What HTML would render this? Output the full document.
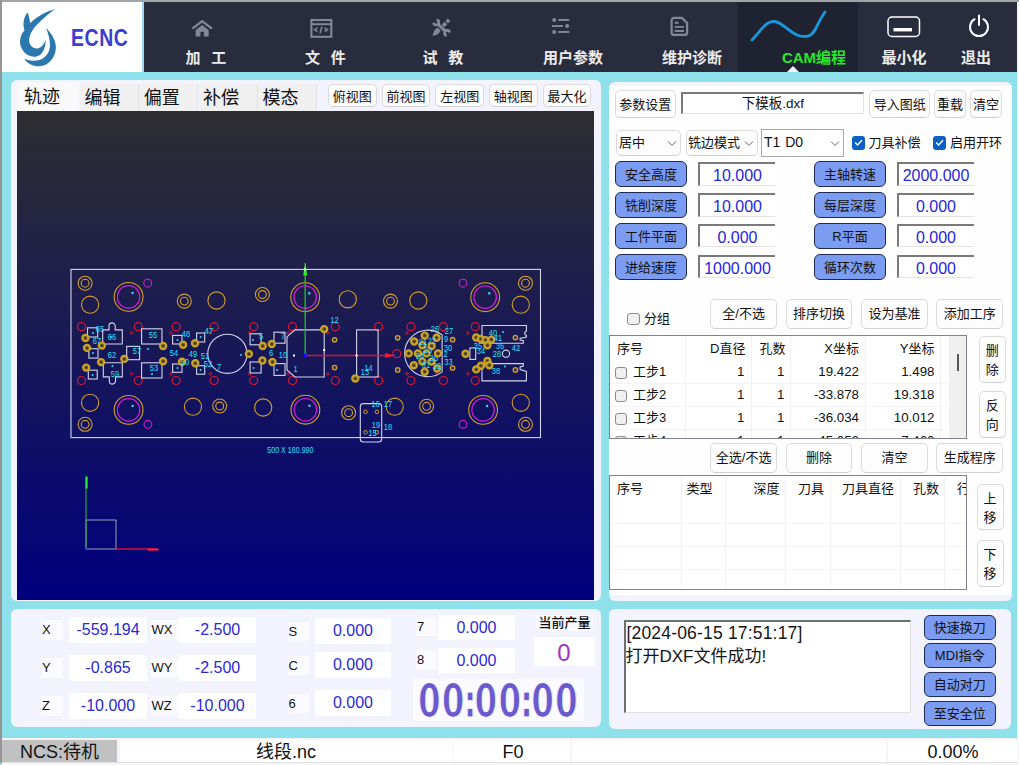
<!DOCTYPE html><html lang="zh"><head><meta charset="utf-8"><title>ECNC</title><style>
*{box-sizing:border-box;margin:0;padding:0}
html,body{width:1019px;height:765px;overflow:hidden;background:#8ee1ea}
body{font-family:"Liberation Sans","Noto Sans CJK SC",sans-serif;color:#111;position:relative}
.abs,.abs *{position:absolute}
#root{position:absolute;left:0;top:0;width:1019px;height:765px;background:#8ee1ea;overflow:hidden}
#root div,#root span,#root svg{position:absolute}
.t{white-space:nowrap;line-height:1}
.c{text-align:center}
.r{text-align:right}
.panel{background:#f2f3fc;border-radius:6px}
.btn{background:#fdfdfd;border:1px solid #dbdbdb;border-bottom-color:#cfcfcf;border-radius:5px;font-size:13px;text-align:center;white-space:nowrap;color:#111}
.bb{background:#7b9cf0;border:1.5px solid #1c2a55;border-radius:6px;font-size:13px;text-align:center;white-space:nowrap;color:#111}
.inp{background:#fff;border-top:2px solid #7a7a7a;border-left:2px solid #7a7a7a;border-bottom:1px solid #e3e3e3;font-size:16px;color:#2525dc;text-align:center;white-space:nowrap}
.val{background:#fff;color:#2a2ad8;font-size:16px;text-align:center;white-space:nowrap}
.lab{background:#fbfbff;font-size:13px;color:#111;white-space:nowrap}
.nav{color:#ececec;font-weight:bold;font-size:15px;white-space:nowrap;text-align:center;line-height:16px}
.tab{font-size:18px;color:#111;white-space:nowrap;text-align:center;background:#f0f0f0;border-right:1px solid #e2e2e2}
.cb{border:1px solid #8a8a8a;border-radius:3px;background:#f0f0f0}
.cbx{border-radius:3px;background:#0b60c4}
.co{position:relative !important;left:-3px;letter-spacing:-5.7px}
.th{font-size:13px;white-space:nowrap;color:#111}
</style></head><body><div id="root"><div class="" style="left:0px;top:0px;width:1019px;height:1.6px;background:#a2a5a5"></div><div class="" style="left:0px;top:0px;width:1.9px;height:763px;background:#969696"></div><div class="" style="left:1017px;top:1.5px;width:2px;height:764px;background:#f7f7fa"></div><div class="" style="left:2px;top:2px;width:140px;height:69.5px;background:#fff"></div><div class="" style="left:142px;top:2px;width:2px;height:69.5px;background:#9fd4f5"></div><div class="" style="left:144px;top:2px;width:873px;height:69.5px;background:#282c3c"></div><div class="" style="left:738px;top:2px;width:120px;height:69.5px;background:#1f2231"></div><svg style="left:10px;top:0px" width="60" height="75" viewBox="0 0 612 765"><g fill="#2a78ad">
<path d="M462 93 C380 115 295 155 205 238 C203 200 192 160 180 128 C150 160 122 230 148 310 C105 350 92 425 112 480 C138 545 200 585 262 578 C335 568 368 480 362 405 C348 450 322 490 275 494 C225 494 192 452 196 402 C200 345 240 285 292 235 C340 190 400 135 462 93 Z"/>
<path d="M368 283 C422 340 468 410 468 482 C468 562 420 645 340 668 C268 688 188 662 143 598 C200 622 268 626 318 604 C376 578 408 518 408 458 C408 398 388 340 368 283 Z"/>
</g></svg><div class="t" style="left:71.4px;top:24.5px;font-size:23px;font-weight:bold;color:#3c3ccf;letter-spacing:0.7px;line-height:26px;transform-origin:0 0;transform:scaleX(0.845)">ECNC</div><div class="nav" style="left:156.4px;top:50px;width:100px;color:#ececec;letter-spacing:0.8px">加&nbsp;&nbsp;工</div><div class="nav" style="left:275.9px;top:50px;width:100px;color:#ececec;letter-spacing:0.8px">文&nbsp;&nbsp;件</div><div class="nav" style="left:393.4px;top:50px;width:100px;color:#ececec;letter-spacing:0.8px">试&nbsp;&nbsp;教</div><div class="nav" style="left:523px;top:50px;width:100px;color:#ececec;letter-spacing:0px">用户参数</div><div class="nav" style="left:642px;top:50px;width:100px;color:#ececec;letter-spacing:0px">维护诊断</div><div class="nav" style="left:764px;top:50px;width:100px;color:#27e827;letter-spacing:0px">CAM编程</div><div class="nav" style="left:854px;top:50px;width:100px;color:#ececec;letter-spacing:0px">最小化</div><div class="nav" style="left:926px;top:50px;width:100px;color:#ececec;letter-spacing:0px">退出</div><svg style="left:191.3px;top:18.6px" width="22.3" height="19.25" viewBox="0 0 24 22" preserveAspectRatio="none"><path d="M1.5 11 L12 2.5 L22.5 11" fill="none" stroke="#828899" stroke-width="2.6" stroke-linejoin="miter"/><path d="M5 12.5 L12 6.8 L19 12.5 V20 H13.8 V14.5 H10.2 V20 H5 Z" fill="#828899"/></svg><svg style="left:310px;top:17px" width="24" height="22" viewBox="0 0 24 22"><rect x="1.4" y="3" width="19.9" height="16.8" fill="none" stroke="#828899" stroke-width="2.1"/><line x1="1.4" y1="7.2" x2="21.3" y2="7.2" stroke="#828899" stroke-width="1.9"/><path d="M7.4 10.9 L4.6 12.8 L7.4 14.7 M14.6 10.9 L17.4 12.8 L14.6 14.7 M11.9 9.6 L10 16.4" fill="none" stroke="#828899" stroke-width="1.6"/></svg><svg style="left:432px;top:17.6px" width="20" height="20" viewBox="0 0 20 20"><g stroke="#828899" fill="none"><path d="M6 6.2 L13.6 13.4" stroke-width="2.9"/><path d="M4.65 1.84 A2.6 2.6 0 1 1 1.64 4.85" stroke-width="2.7"/><path d="M17.76 14.55 A2.6 2.6 0 1 0 14.75 17.56" stroke-width="2.7"/></g><g fill="#828899"><path d="M0.5 18 L2.2 12.4 L5.6 9.4 L8.8 12.6 L6 16.2 Z"/><rect x="10.3" y="4.8" width="4.2" height="3.6" transform="rotate(-45 12.4 6.6)"/><rect x="14.2" y="1.2" width="3.4" height="3.6" transform="rotate(-45 15.9 3)"/></g></svg><svg style="left:550px;top:16px" width="22" height="20" viewBox="0 0 22 20"><g fill="#828899"><circle cx="4.2" cy="3.9" r="2"/><rect x="8.2" y="3" width="11.2" height="1.9"/><rect x="2" y="9.1" width="11" height="1.9"/><circle cx="17.1" cy="9.9" r="2"/><circle cx="4.2" cy="15.9" r="2"/><rect x="8.2" y="15" width="11.2" height="1.9"/></g></svg><svg style="left:670px;top:16px" width="20" height="22" viewBox="0 0 20 22"><path d="M4.1 1.9 H12 L17.1 7 V16.4 A2.5 2.5 0 0 1 14.6 18.9 H4.1 A2.5 2.5 0 0 1 1.6 16.4 V4.4 A2.5 2.5 0 0 1 4.1 1.9 Z" fill="none" stroke="#828899" stroke-width="2.2"/><path d="M4.7 6.7 H8.6 M4.7 10.9 H14 M4.7 15 H14" stroke="#828899" stroke-width="1.9"/></svg><svg style="left:748px;top:8px" width="84" height="38" viewBox="0 0 84 38"><path d="M4 32 C12 24 18 12 27 13.5 C36 15 42 26 52 28 C62 30 65 26 68 20 C71 14 74 8 77 4" fill="none" stroke="#1b98dc" stroke-width="2.8" stroke-linecap="round"/></svg><svg style="left:787px;top:66px" width="12" height="6" viewBox="0 0 12 6"><path d="M0 6 L6 0 L12 6 Z" fill="#f2f3fc"/></svg><svg style="left:886px;top:15px" width="36" height="24" viewBox="0 0 36 24"><rect x="2" y="2" width="31.5" height="19.5" rx="4" fill="none" stroke="#fff" stroke-width="1.5"/><rect x="7.5" y="13" width="18.5" height="3.4" fill="#fff"/></svg><svg style="left:966px;top:13px" width="26" height="26" viewBox="0 0 26 26"><path d="M8.6 6.2 A9 9 0 1 0 17.4 6.2" fill="none" stroke="#fff" stroke-width="2" stroke-linecap="round"/><path d="M13 2.5 V12" stroke="#fff" stroke-width="2" stroke-linecap="round"/></svg><div class="panel" style="left:11px;top:80px;width:590px;height:521px;"></div><div class="tab" style="left:17px;top:82px;width:62px;height:29px;line-height:29px;background:#f9f9fc;border-right:none;line-height:31px;text-align:left;padding-left:7px">轨迹</div><div class="tab" style="left:80.0px;top:84px;width:59px;height:27px;line-height:27px;line-height:28px;text-align:left;padding-left:4.5px">编辑</div><div class="tab" style="left:139.3px;top:84px;width:59px;height:27px;line-height:27px;line-height:28px;text-align:left;padding-left:4.5px">偏置</div><div class="tab" style="left:198.6px;top:84px;width:59px;height:27px;line-height:27px;line-height:28px;text-align:left;padding-left:4.5px">补偿</div><div class="tab" style="left:257.9px;top:84px;width:59px;height:27px;line-height:27px;line-height:28px;text-align:left;padding-left:4.5px">模态</div><div class="btn" style="left:328.0px;top:83.8px;width:48.5px;height:23.2px;line-height:23.2px;line-height:23px">俯视图</div><div class="btn" style="left:381.7px;top:83.8px;width:48.5px;height:23.2px;line-height:23.2px;line-height:23px">前视图</div><div class="btn" style="left:435.4px;top:83.8px;width:48.5px;height:23.2px;line-height:23.2px;line-height:23px">左视图</div><div class="btn" style="left:489.1px;top:83.8px;width:48.5px;height:23.2px;line-height:23.2px;line-height:23px">轴视图</div><div class="btn" style="left:542.8px;top:83.8px;width:48.5px;height:23.2px;line-height:23.2px;line-height:23px">最大化</div><div id="cv" style="left:17px;top:111.4px;width:577px;height:488.4px;background:linear-gradient(180deg,#2e2e31 0%,#00007f 100%);overflow:hidden"><svg style="left:0;top:-0.4px" width="577" height="489" viewBox="17 111 577 489" font-family="Liberation Sans, sans-serif"><rect x="71" y="269.4" width="469.5" height="168.2" fill="none" stroke="#d4d4ec" stroke-width="1.1"/><circle cx="85.1" cy="283.2" r="7" fill="none" stroke="#d4a02c" stroke-width="1.1"/><circle cx="85.1" cy="283.2" r="3.9" fill="none" stroke="#d4a02c" stroke-width="1.1"/><circle cx="184.3" cy="301.1" r="7" fill="none" stroke="#d4a02c" stroke-width="1.1"/><circle cx="184.3" cy="301.1" r="3.9" fill="none" stroke="#d4a02c" stroke-width="1.1"/><circle cx="262.4" cy="294.5" r="7" fill="none" stroke="#d4a02c" stroke-width="1.1"/><circle cx="262.4" cy="294.5" r="3.9" fill="none" stroke="#d4a02c" stroke-width="1.1"/><circle cx="390.5" cy="301.1" r="7" fill="none" stroke="#d4a02c" stroke-width="1.1"/><circle cx="390.5" cy="301.1" r="3.9" fill="none" stroke="#d4a02c" stroke-width="1.1"/><circle cx="525.5" cy="283.2" r="7" fill="none" stroke="#d4a02c" stroke-width="1.1"/><circle cx="525.5" cy="283.2" r="3.9" fill="none" stroke="#d4a02c" stroke-width="1.1"/><circle cx="90.1" cy="304.7" r="8.6" fill="none" stroke="#d4a02c" stroke-width="1.1"/><circle cx="216.5" cy="300.5" r="8.6" fill="none" stroke="#d4a02c" stroke-width="1.1"/><circle cx="347.8" cy="299.3" r="8.6" fill="none" stroke="#d4a02c" stroke-width="1.1"/><circle cx="418.3" cy="300.5" r="8.6" fill="none" stroke="#d4a02c" stroke-width="1.1"/><circle cx="520.8" cy="304.7" r="8.6" fill="none" stroke="#d4a02c" stroke-width="1.1"/><circle cx="128.6" cy="296.9" r="14.4" fill="none" stroke="#d4a02c" stroke-width="1.1"/><circle cx="128.6" cy="296.9" r="11.2" fill="none" stroke="#d020d0" stroke-width="1.2"/><circle cx="132.6" cy="292.9" r="1.2" fill="#28e0ff"/><circle cx="305.2" cy="297.2" r="14.4" fill="none" stroke="#d4a02c" stroke-width="1.1"/><circle cx="305.2" cy="297.2" r="11.2" fill="none" stroke="#d020d0" stroke-width="1.2"/><circle cx="309.2" cy="293.2" r="1.2" fill="#28e0ff"/><circle cx="485.2" cy="297.2" r="14.4" fill="none" stroke="#d4a02c" stroke-width="1.1"/><circle cx="485.2" cy="297.2" r="11.2" fill="none" stroke="#d020d0" stroke-width="1.2"/><circle cx="489.2" cy="293.2" r="1.2" fill="#28e0ff"/><circle cx="147.7" cy="283.2" r="3.9" fill="none" stroke="#d020d0" stroke-width="1.1"/><circle cx="463.0" cy="283.2" r="3.9" fill="none" stroke="#d020d0" stroke-width="1.1"/><circle cx="85.1" cy="424.3" r="7" fill="none" stroke="#d4a02c" stroke-width="1.1"/><circle cx="85.1" cy="424.3" r="3.9" fill="none" stroke="#d4a02c" stroke-width="1.1"/><circle cx="219.7" cy="406.0" r="7" fill="none" stroke="#d4a02c" stroke-width="1.1"/><circle cx="219.7" cy="406.0" r="3.9" fill="none" stroke="#d4a02c" stroke-width="1.1"/><circle cx="348.6" cy="412.7" r="7" fill="none" stroke="#d4a02c" stroke-width="1.1"/><circle cx="348.6" cy="412.7" r="3.9" fill="none" stroke="#d4a02c" stroke-width="1.1"/><circle cx="426.6" cy="406.3" r="7" fill="none" stroke="#d4a02c" stroke-width="1.1"/><circle cx="426.6" cy="406.3" r="3.9" fill="none" stroke="#d4a02c" stroke-width="1.1"/><circle cx="525.5" cy="424.3" r="7" fill="none" stroke="#d4a02c" stroke-width="1.1"/><circle cx="525.5" cy="424.3" r="3.9" fill="none" stroke="#d4a02c" stroke-width="1.1"/><circle cx="90.1" cy="402.8" r="8.6" fill="none" stroke="#d4a02c" stroke-width="1.1"/><circle cx="193.0" cy="406.7" r="8.6" fill="none" stroke="#d4a02c" stroke-width="1.1"/><circle cx="263.2" cy="407.5" r="8.6" fill="none" stroke="#d4a02c" stroke-width="1.1"/><circle cx="394.7" cy="406.7" r="8.6" fill="none" stroke="#d4a02c" stroke-width="1.1"/><circle cx="520.8" cy="402.8" r="8.6" fill="none" stroke="#d4a02c" stroke-width="1.1"/><circle cx="128.6" cy="409.9" r="14.4" fill="none" stroke="#d4a02c" stroke-width="1.1"/><circle cx="128.6" cy="409.9" r="11.2" fill="none" stroke="#d020d0" stroke-width="1.2"/><circle cx="132.6" cy="405.9" r="1.2" fill="#28e0ff"/><circle cx="305.4" cy="409.7" r="14.4" fill="none" stroke="#d4a02c" stroke-width="1.1"/><circle cx="305.4" cy="409.7" r="11.2" fill="none" stroke="#d020d0" stroke-width="1.2"/><circle cx="309.4" cy="405.7" r="1.2" fill="#28e0ff"/><circle cx="483.1" cy="409.9" r="14.4" fill="none" stroke="#d4a02c" stroke-width="1.1"/><circle cx="483.1" cy="409.9" r="11.2" fill="none" stroke="#d020d0" stroke-width="1.2"/><circle cx="487.1" cy="405.9" r="1.2" fill="#28e0ff"/><circle cx="147.9" cy="424.3" r="3.9" fill="none" stroke="#d020d0" stroke-width="1.1"/><circle cx="463.0" cy="424.3" r="3.9" fill="none" stroke="#d020d0" stroke-width="1.1"/><circle cx="81.5" cy="326.7" r="4" fill="none" stroke="#d81838" stroke-width="1.2"/><circle cx="81.5" cy="380.5" r="4" fill="none" stroke="#d81838" stroke-width="1.2"/><circle cx="138.3" cy="326.7" r="4" fill="none" stroke="#d81838" stroke-width="1.2"/><circle cx="138.3" cy="380.5" r="4" fill="none" stroke="#d81838" stroke-width="1.2"/><circle cx="176.2" cy="326.7" r="4" fill="none" stroke="#d81838" stroke-width="1.2"/><circle cx="176.2" cy="380.5" r="4" fill="none" stroke="#d81838" stroke-width="1.2"/><circle cx="214.2" cy="326.7" r="4" fill="none" stroke="#d81838" stroke-width="1.2"/><circle cx="214.2" cy="380.5" r="4" fill="none" stroke="#d81838" stroke-width="1.2"/><circle cx="253.7" cy="326.7" r="4" fill="none" stroke="#d81838" stroke-width="1.2"/><circle cx="253.7" cy="380.5" r="4" fill="none" stroke="#d81838" stroke-width="1.2"/><circle cx="292.5" cy="326.7" r="4" fill="none" stroke="#d81838" stroke-width="1.2"/><circle cx="292.5" cy="380.5" r="4" fill="none" stroke="#d81838" stroke-width="1.2"/><circle cx="335.4" cy="326.7" r="4" fill="none" stroke="#d81838" stroke-width="1.2"/><circle cx="335.4" cy="380.5" r="4" fill="none" stroke="#d81838" stroke-width="1.2"/><circle cx="378.6" cy="326.7" r="4" fill="none" stroke="#d81838" stroke-width="1.2"/><circle cx="378.6" cy="380.5" r="4" fill="none" stroke="#d81838" stroke-width="1.2"/><circle cx="410.9" cy="326.7" r="4" fill="none" stroke="#d81838" stroke-width="1.2"/><circle cx="410.9" cy="380.5" r="4" fill="none" stroke="#d81838" stroke-width="1.2"/><circle cx="443.4" cy="326.7" r="4" fill="none" stroke="#d81838" stroke-width="1.2"/><circle cx="443.4" cy="380.5" r="4" fill="none" stroke="#d81838" stroke-width="1.2"/><circle cx="475.3" cy="326.7" r="4" fill="none" stroke="#d81838" stroke-width="1.2"/><circle cx="475.3" cy="380.5" r="4" fill="none" stroke="#d81838" stroke-width="1.2"/><circle cx="396.8" cy="353.7" r="4" fill="none" stroke="#d81838" stroke-width="1.2"/><circle cx="131.6" cy="333.0" r="1.2" fill="none" stroke="#d81838" stroke-width="0.9"/><circle cx="131.6" cy="373.8" r="1.2" fill="none" stroke="#d81838" stroke-width="0.9"/><circle cx="171.0" cy="333.0" r="1.2" fill="none" stroke="#d81838" stroke-width="0.9"/><circle cx="171.0" cy="373.8" r="1.2" fill="none" stroke="#d81838" stroke-width="0.9"/><circle cx="210.2" cy="333.0" r="1.2" fill="none" stroke="#d81838" stroke-width="0.9"/><circle cx="210.2" cy="373.8" r="1.2" fill="none" stroke="#d81838" stroke-width="0.9"/><circle cx="249.6" cy="333.0" r="1.2" fill="none" stroke="#d81838" stroke-width="0.9"/><circle cx="249.6" cy="373.8" r="1.2" fill="none" stroke="#d81838" stroke-width="0.9"/><circle cx="288.0" cy="333.0" r="1.2" fill="none" stroke="#d81838" stroke-width="0.9"/><circle cx="288.0" cy="373.8" r="1.2" fill="none" stroke="#d81838" stroke-width="0.9"/><circle cx="327.8" cy="333.0" r="1.2" fill="none" stroke="#d81838" stroke-width="0.9"/><circle cx="327.8" cy="373.8" r="1.2" fill="none" stroke="#d81838" stroke-width="0.9"/><circle cx="407.0" cy="333.0" r="1.2" fill="none" stroke="#d81838" stroke-width="0.9"/><circle cx="407.0" cy="373.8" r="1.2" fill="none" stroke="#d81838" stroke-width="0.9"/><circle cx="437.0" cy="333.0" r="1.2" fill="none" stroke="#d81838" stroke-width="0.9"/><circle cx="437.0" cy="373.8" r="1.2" fill="none" stroke="#d81838" stroke-width="0.9"/><circle cx="468.0" cy="333.0" r="1.2" fill="none" stroke="#d81838" stroke-width="0.9"/><circle cx="468.0" cy="373.8" r="1.2" fill="none" stroke="#d81838" stroke-width="0.9"/><rect x="87.5" y="327.8" width="10.2" height="9.2" rx="0" fill="none" stroke="#d4d4ec" stroke-width="1.1"/><rect x="88.9" y="348.7" width="9.1" height="9.4" rx="0" fill="none" stroke="#d4d4ec" stroke-width="1.1"/><rect x="88.3" y="370.2" width="8.9" height="8.8" rx="0" fill="none" stroke="#d4d4ec" stroke-width="1.1"/><path d="M102.7 344 V329.9 H109 V326 A3.1 3.1 0 0 1 115.2 326 V329.9 H122.3 V344 Z" fill="none" stroke="#d4d4ec" stroke-width="1.1"/><path d="M103.3 362.8 H122.3 V376.9 H115.5 V381 A3.1 3.1 0 0 1 109.3 381 V376.9 H103.3 Z" fill="none" stroke="#d4d4ec" stroke-width="1.1"/><rect x="141.6" y="328.8" width="20.4" height="15.2" rx="0" fill="none" stroke="#d4d4ec" stroke-width="1.1"/><rect x="141.6" y="362.8" width="20.4" height="15.2" rx="0" fill="none" stroke="#d4d4ec" stroke-width="1.1"/><rect x="126.7" y="346.4" width="12.9" height="13.3" rx="0" fill="none" stroke="#d4d4ec" stroke-width="1.1"/><rect x="172.6" y="335.4" width="9.4" height="8.6" rx="0" fill="none" stroke="#d4d4ec" stroke-width="1.1"/><rect x="172.6" y="364.0" width="9.4" height="8.3" rx="0" fill="none" stroke="#d4d4ec" stroke-width="1.1"/><rect x="196.6" y="333.0" width="8.1" height="9.0" rx="0" fill="none" stroke="#d4d4ec" stroke-width="1.1"/><rect x="196.6" y="365.7" width="8.1" height="8.5" rx="0" fill="none" stroke="#d4d4ec" stroke-width="1.1"/><circle cx="227.4" cy="353.8" r="19.6" fill="none" stroke="#d4d4ec" stroke-width="1.1"/><rect x="250.1" y="333.8" width="11.0" height="11.0" rx="0" fill="none" stroke="#d4d4ec" stroke-width="1.1"/><rect x="250.1" y="362.0" width="11.0" height="11.0" rx="0" fill="none" stroke="#d4d4ec" stroke-width="1.1"/><rect x="274.0" y="332.2" width="11.0" height="11.0" rx="0" fill="none" stroke="#d4d4ec" stroke-width="1.1"/><rect x="274.0" y="363.6" width="11.0" height="11.8" rx="0" fill="none" stroke="#d4d4ec" stroke-width="1.1"/><path d="M294.9 329.9 H324.2 V377 H294.9 L287 370 V336.9 Z" fill="none" stroke="#d4d4ec" stroke-width="1.1"/><rect x="356.6" y="329.9" width="21.5" height="47.1" rx="0" fill="none" stroke="#d4d4ec" stroke-width="1.1"/><rect x="360.3" y="403.6" width="21.4" height="38.4" rx="3" fill="none" stroke="#d4d4ec" stroke-width="1.1"/><circle cx="365.5" cy="411.8" r="1.8" fill="none" stroke="#d4a02c" stroke-width="1"/><circle cx="377.0" cy="411.8" r="1.8" fill="none" stroke="#d4a02c" stroke-width="1"/><circle cx="365.5" cy="432.3" r="1.8" fill="none" stroke="#d4a02c" stroke-width="1"/><circle cx="377.0" cy="432.3" r="1.8" fill="none" stroke="#d4a02c" stroke-width="1"/><path d="M442.1 334.9 V371.9 A23.3 23.3 0 1 1 442.1 334.9 Z" fill="none" stroke="#d4d4ec" stroke-width="1.1"/><path d="M482 325.5 H526.4 V331 L524.8 332.5 V334 L526.4 335.5 V337 L520.1 338.5 V340 L523.3 340.8 V343.2 H482 Z" fill="none" stroke="#d4d4ec" stroke-width="1.1"/><path d="M482 363.6 H523.3 V366 L520.1 367 V369.5 L526.4 371.5 V380.9 H482 Z" fill="none" stroke="#d4d4ec" stroke-width="1.1"/><rect x="469.9" y="347.9" width="5.8" height="11.5" rx="0" fill="none" stroke="#d4d4ec" stroke-width="1.1"/><circle cx="506.0" cy="353.7" r="3.6" fill="none" stroke="#d4d4ec" stroke-width="1.1"/><circle cx="85.4" cy="338.0" r="3.1" fill="#6a5420" stroke="#c9a52a" stroke-width="2.2"/><circle cx="85.4" cy="338.0" r="0.8" fill="#2a2440"/><circle cx="87.0" cy="347.9" r="3.1" fill="#6a5420" stroke="#c9a52a" stroke-width="2.2"/><circle cx="87.0" cy="347.9" r="0.8" fill="#2a2440"/><circle cx="101.9" cy="345.6" r="3.1" fill="#6a5420" stroke="#c9a52a" stroke-width="2.2"/><circle cx="101.9" cy="345.6" r="0.8" fill="#2a2440"/><circle cx="101.1" cy="362.1" r="3.1" fill="#6a5420" stroke="#c9a52a" stroke-width="2.2"/><circle cx="101.1" cy="362.1" r="0.8" fill="#2a2440"/><circle cx="86.2" cy="367.6" r="3.1" fill="#6a5420" stroke="#c9a52a" stroke-width="2.2"/><circle cx="86.2" cy="367.6" r="0.8" fill="#2a2440"/><circle cx="124.3" cy="358.9" r="3.1" fill="#6a5420" stroke="#c9a52a" stroke-width="2.2"/><circle cx="124.3" cy="358.9" r="0.8" fill="#2a2440"/><circle cx="163.1" cy="346.0" r="3.1" fill="#6a5420" stroke="#c9a52a" stroke-width="2.2"/><circle cx="163.1" cy="346.0" r="0.8" fill="#2a2440"/><circle cx="163.1" cy="361.3" r="3.1" fill="#6a5420" stroke="#c9a52a" stroke-width="2.2"/><circle cx="163.1" cy="361.3" r="0.8" fill="#2a2440"/><circle cx="183.1" cy="344.8" r="3.1" fill="#6a5420" stroke="#c9a52a" stroke-width="2.2"/><circle cx="183.1" cy="344.8" r="0.8" fill="#2a2440"/><circle cx="195.0" cy="343.2" r="3.1" fill="#6a5420" stroke="#c9a52a" stroke-width="2.2"/><circle cx="195.0" cy="343.2" r="0.8" fill="#2a2440"/><circle cx="182.0" cy="361.7" r="3.1" fill="#6a5420" stroke="#c9a52a" stroke-width="2.2"/><circle cx="182.0" cy="361.7" r="0.8" fill="#2a2440"/><circle cx="195.3" cy="363.3" r="3.1" fill="#6a5420" stroke="#c9a52a" stroke-width="2.2"/><circle cx="195.3" cy="363.3" r="0.8" fill="#2a2440"/><circle cx="262.7" cy="346.0" r="3.1" fill="#6a5420" stroke="#c9a52a" stroke-width="2.2"/><circle cx="262.7" cy="346.0" r="0.8" fill="#2a2440"/><circle cx="271.8" cy="344.0" r="3.1" fill="#6a5420" stroke="#c9a52a" stroke-width="2.2"/><circle cx="271.8" cy="344.0" r="0.8" fill="#2a2440"/><circle cx="248.9" cy="353.9" r="3.1" fill="#6a5420" stroke="#c9a52a" stroke-width="2.2"/><circle cx="248.9" cy="353.9" r="0.8" fill="#2a2440"/><circle cx="262.4" cy="360.5" r="3.1" fill="#6a5420" stroke="#c9a52a" stroke-width="2.2"/><circle cx="262.4" cy="360.5" r="0.8" fill="#2a2440"/><circle cx="272.4" cy="362.0" r="3.1" fill="#6a5420" stroke="#c9a52a" stroke-width="2.2"/><circle cx="272.4" cy="362.0" r="0.8" fill="#2a2440"/><circle cx="324.2" cy="329.1" r="3.1" fill="#6a5420" stroke="#c9a52a" stroke-width="2.2"/><circle cx="324.2" cy="329.1" r="0.8" fill="#2a2440"/><circle cx="355.3" cy="378.5" r="3.1" fill="#6a5420" stroke="#c9a52a" stroke-width="2.2"/><circle cx="355.3" cy="378.5" r="0.8" fill="#2a2440"/><circle cx="465.5" cy="353.7" r="3.1" fill="#6a5420" stroke="#c9a52a" stroke-width="2.2"/><circle cx="465.5" cy="353.7" r="0.8" fill="#2a2440"/><circle cx="424.7" cy="335.6" r="3.1" fill="#6a5420" stroke="#c9a52a" stroke-width="2.2"/><circle cx="424.7" cy="335.6" r="0.8" fill="#2a2440"/><circle cx="436.6" cy="337.8" r="3.1" fill="#6a5420" stroke="#c9a52a" stroke-width="2.2"/><circle cx="436.6" cy="337.8" r="0.8" fill="#2a2440"/><circle cx="414.2" cy="341.5" r="3.1" fill="#6a5420" stroke="#c9a52a" stroke-width="2.2"/><circle cx="414.2" cy="341.5" r="0.8" fill="#2a2440"/><circle cx="422.4" cy="345.2" r="3.1" fill="#6a5420" stroke="#c9a52a" stroke-width="2.2"/><circle cx="422.4" cy="345.2" r="0.8" fill="#2a2440"/><circle cx="431.6" cy="346.1" r="3.1" fill="#6a5420" stroke="#c9a52a" stroke-width="2.2"/><circle cx="431.6" cy="346.1" r="0.8" fill="#2a2440"/><circle cx="408.7" cy="353.4" r="3.1" fill="#6a5420" stroke="#c9a52a" stroke-width="2.2"/><circle cx="408.7" cy="353.4" r="0.8" fill="#2a2440"/><circle cx="417.9" cy="353.4" r="3.1" fill="#6a5420" stroke="#c9a52a" stroke-width="2.2"/><circle cx="417.9" cy="353.4" r="0.8" fill="#2a2440"/><circle cx="426.6" cy="353.4" r="3.1" fill="#6a5420" stroke="#c9a52a" stroke-width="2.2"/><circle cx="426.6" cy="353.4" r="0.8" fill="#2a2440"/><circle cx="438.0" cy="353.4" r="3.1" fill="#6a5420" stroke="#c9a52a" stroke-width="2.2"/><circle cx="438.0" cy="353.4" r="0.8" fill="#2a2440"/><circle cx="422.4" cy="361.6" r="3.1" fill="#6a5420" stroke="#c9a52a" stroke-width="2.2"/><circle cx="422.4" cy="361.6" r="0.8" fill="#2a2440"/><circle cx="431.6" cy="361.6" r="3.1" fill="#6a5420" stroke="#c9a52a" stroke-width="2.2"/><circle cx="431.6" cy="361.6" r="0.8" fill="#2a2440"/><circle cx="413.8" cy="365.3" r="3.1" fill="#6a5420" stroke="#c9a52a" stroke-width="2.2"/><circle cx="413.8" cy="365.3" r="0.8" fill="#2a2440"/><circle cx="437.1" cy="368.5" r="3.1" fill="#6a5420" stroke="#c9a52a" stroke-width="2.2"/><circle cx="437.1" cy="368.5" r="0.8" fill="#2a2440"/><circle cx="424.7" cy="371.7" r="3.1" fill="#6a5420" stroke="#c9a52a" stroke-width="2.2"/><circle cx="424.7" cy="371.7" r="0.8" fill="#2a2440"/><circle cx="476.2" cy="337.5" r="3.1" fill="#6a5420" stroke="#c9a52a" stroke-width="2.2"/><circle cx="476.2" cy="337.5" r="0.8" fill="#2a2440"/><circle cx="480.9" cy="339.0" r="3.1" fill="#6a5420" stroke="#c9a52a" stroke-width="2.2"/><circle cx="480.9" cy="339.0" r="0.8" fill="#2a2440"/><circle cx="485.6" cy="340.1" r="3.1" fill="#6a5420" stroke="#c9a52a" stroke-width="2.2"/><circle cx="485.6" cy="340.1" r="0.8" fill="#2a2440"/><circle cx="491.4" cy="339.6" r="3.1" fill="#6a5420" stroke="#c9a52a" stroke-width="2.2"/><circle cx="491.4" cy="339.6" r="0.8" fill="#2a2440"/><circle cx="487.4" cy="345.3" r="3.1" fill="#6a5420" stroke="#c9a52a" stroke-width="2.2"/><circle cx="487.4" cy="345.3" r="0.8" fill="#2a2440"/><circle cx="487.4" cy="361.0" r="3.1" fill="#6a5420" stroke="#c9a52a" stroke-width="2.2"/><circle cx="487.4" cy="361.0" r="0.8" fill="#2a2440"/><circle cx="480.9" cy="365.7" r="3.1" fill="#6a5420" stroke="#c9a52a" stroke-width="2.2"/><circle cx="480.9" cy="365.7" r="0.8" fill="#2a2440"/><circle cx="476.2" cy="369.4" r="3.1" fill="#6a5420" stroke="#c9a52a" stroke-width="2.2"/><circle cx="476.2" cy="369.4" r="0.8" fill="#2a2440"/><circle cx="489.3" cy="365.2" r="3.1" fill="#6a5420" stroke="#c9a52a" stroke-width="2.2"/><circle cx="489.3" cy="365.2" r="0.8" fill="#2a2440"/><circle cx="334.6" cy="339.8" r="2.2" fill="#3a3050" stroke="#d4a02c" stroke-width="1.3"/><circle cx="334.6" cy="367.6" r="2.2" fill="#3a3050" stroke="#d4a02c" stroke-width="1.3"/><circle cx="397.7" cy="337.8" r="2.2" fill="#3a3050" stroke="#d4a02c" stroke-width="1.3"/><circle cx="452.6" cy="339.7" r="2.2" fill="#3a3050" stroke="#d4a02c" stroke-width="1.3"/><circle cx="397.7" cy="369.9" r="2.2" fill="#3a3050" stroke="#d4a02c" stroke-width="1.3"/><circle cx="452.6" cy="368.0" r="2.2" fill="#3a3050" stroke="#d4a02c" stroke-width="1.3"/><circle cx="515.4" cy="337.5" r="2.2" fill="#3a3050" stroke="#d4a02c" stroke-width="1.3"/><circle cx="515.4" cy="369.9" r="2.2" fill="#3a3050" stroke="#d4a02c" stroke-width="1.3"/><text transform="translate(100.0,331.5) scale(0.78,1)" font-size="9.6" fill="#28e0ff" text-anchor="middle">65</text><text transform="translate(97.0,343.5) scale(0.78,1)" font-size="9.6" fill="#28e0ff" text-anchor="middle">67</text><text transform="translate(112.0,339.5) scale(0.78,1)" font-size="9.6" fill="#28e0ff" text-anchor="middle">66</text><text transform="translate(153.0,337.5) scale(0.78,1)" font-size="9.6" fill="#28e0ff" text-anchor="middle">55</text><text transform="translate(112.0,357.5) scale(0.78,1)" font-size="9.6" fill="#28e0ff" text-anchor="middle">62</text><text transform="translate(137.0,353.5) scale(0.78,1)" font-size="9.6" fill="#28e0ff" text-anchor="middle">57</text><text transform="translate(154.0,370.5) scale(0.78,1)" font-size="9.6" fill="#28e0ff" text-anchor="middle">53</text><text transform="translate(115.0,376.5) scale(0.78,1)" font-size="9.6" fill="#28e0ff" text-anchor="middle">59</text><text transform="translate(174.0,355.5) scale(0.78,1)" font-size="9.6" fill="#28e0ff" text-anchor="middle">54</text><text transform="translate(186.0,336.5) scale(0.78,1)" font-size="9.6" fill="#28e0ff" text-anchor="middle">48</text><text transform="translate(193.0,356.5) scale(0.78,1)" font-size="9.6" fill="#28e0ff" text-anchor="middle">49</text><text transform="translate(185.0,364.5) scale(0.78,1)" font-size="9.6" fill="#28e0ff" text-anchor="middle">50</text><text transform="translate(208.0,366.5) scale(0.78,1)" font-size="9.6" fill="#28e0ff" text-anchor="middle">52</text><text transform="translate(219.0,369.5) scale(0.78,1)" font-size="9.6" fill="#28e0ff" text-anchor="middle">7</text><text transform="translate(205.0,358.5) scale(0.78,1)" font-size="9.6" fill="#28e0ff" text-anchor="middle">51</text><text transform="translate(209.0,333.5) scale(0.78,1)" font-size="9.6" fill="#28e0ff" text-anchor="middle">47</text><text transform="translate(334.4,322.5) scale(0.78,1)" font-size="9.6" fill="#28e0ff" text-anchor="middle">12</text><text transform="translate(283.0,357.5) scale(0.78,1)" font-size="9.6" fill="#28e0ff" text-anchor="middle">10</text><text transform="translate(271.0,355.5) scale(0.78,1)" font-size="9.6" fill="#28e0ff" text-anchor="middle">6</text><text transform="translate(261.0,338.5) scale(0.78,1)" font-size="9.6" fill="#28e0ff" text-anchor="middle">5</text><text transform="translate(283.0,338.5) scale(0.78,1)" font-size="9.6" fill="#28e0ff" text-anchor="middle">7</text><text transform="translate(295.5,371.5) scale(0.78,1)" font-size="9.6" fill="#28e0ff" text-anchor="middle">1</text><text transform="translate(368.5,370.5) scale(0.78,1)" font-size="9.6" fill="#28e0ff" text-anchor="middle">14</text><text transform="translate(365.0,374.5) scale(0.78,1)" font-size="9.6" fill="#28e0ff" text-anchor="middle">13</text><text transform="translate(375.5,406.5) scale(0.78,1)" font-size="9.6" fill="#28e0ff" text-anchor="middle">16</text><text transform="translate(388.0,406.5) scale(0.78,1)" font-size="9.6" fill="#28e0ff" text-anchor="middle">17</text><text transform="translate(376.0,427.5) scale(0.78,1)" font-size="9.6" fill="#28e0ff" text-anchor="middle">19</text><text transform="translate(388.0,429.5) scale(0.78,1)" font-size="9.6" fill="#28e0ff" text-anchor="middle">18</text><text transform="translate(372.5,435.5) scale(0.78,1)" font-size="9.6" fill="#28e0ff" text-anchor="middle">15</text><text transform="translate(435.0,331.5) scale(0.78,1)" font-size="9.6" fill="#28e0ff" text-anchor="middle">26</text><text transform="translate(449.0,333.5) scale(0.78,1)" font-size="9.6" fill="#28e0ff" text-anchor="middle">27</text><text transform="translate(448.0,350.5) scale(0.78,1)" font-size="9.6" fill="#28e0ff" text-anchor="middle">30</text><text transform="translate(448.5,364.5) scale(0.78,1)" font-size="9.6" fill="#28e0ff" text-anchor="middle">33</text><text transform="translate(445.5,357.0) scale(0.78,1)" font-size="9.6" fill="#28e0ff" text-anchor="middle">2</text><text transform="translate(446.0,341.5) scale(0.78,1)" font-size="9.6" fill="#28e0ff" text-anchor="middle">9</text><text transform="translate(498.0,340.5) scale(0.78,1)" font-size="9.6" fill="#28e0ff" text-anchor="middle">41</text><text transform="translate(516.0,350.5) scale(0.78,1)" font-size="9.6" fill="#28e0ff" text-anchor="middle">42</text><text transform="translate(493.0,335.5) scale(0.78,1)" font-size="9.6" fill="#28e0ff" text-anchor="middle">40</text><text transform="translate(500.0,348.5) scale(0.78,1)" font-size="9.6" fill="#28e0ff" text-anchor="middle">36</text><text transform="translate(497.0,356.5) scale(0.78,1)" font-size="9.6" fill="#28e0ff" text-anchor="middle">28</text><text transform="translate(496.0,373.5) scale(0.78,1)" font-size="9.6" fill="#28e0ff" text-anchor="middle">38</text><text transform="translate(478.0,348.5) scale(0.78,1)" font-size="9.6" fill="#28e0ff" text-anchor="middle">35</text><text transform="translate(481.0,353.5) scale(0.78,1)" font-size="9.6" fill="#28e0ff" text-anchor="middle">34</text><text transform="translate(423.0,344.5) scale(0.78,1)" font-size="9.6" fill="#28e0ff" text-anchor="middle">21</text><text transform="translate(432.0,343.5) scale(0.78,1)" font-size="9.6" fill="#28e0ff" text-anchor="middle">22</text><text transform="translate(428.0,352.5) scale(0.78,1)" font-size="9.6" fill="#28e0ff" text-anchor="middle">23</text><text transform="translate(420.0,358.5) scale(0.78,1)" font-size="9.6" fill="#28e0ff" text-anchor="middle">24</text><text transform="translate(434.0,360.5) scale(0.78,1)" font-size="9.6" fill="#28e0ff" text-anchor="middle">25</text><text transform="translate(426.0,367.5) scale(0.78,1)" font-size="9.6" fill="#28e0ff" text-anchor="middle">31</text><text transform="translate(437.0,368.5) scale(0.78,1)" font-size="9.6" fill="#28e0ff" text-anchor="middle">32</text><circle cx="93.0" cy="333.0" r="1" fill="#28e0ff"/><circle cx="111.0" cy="337.0" r="1" fill="#28e0ff"/><circle cx="93.0" cy="353.0" r="1" fill="#28e0ff"/><circle cx="92.5" cy="375.0" r="1" fill="#28e0ff"/><circle cx="112.5" cy="366.0" r="1" fill="#28e0ff"/><circle cx="177.5" cy="340.0" r="1" fill="#28e0ff"/><circle cx="177.5" cy="368.0" r="1" fill="#28e0ff"/><circle cx="200.6" cy="337.0" r="1" fill="#28e0ff"/><circle cx="200.6" cy="370.0" r="1" fill="#28e0ff"/><circle cx="152.0" cy="374.0" r="1" fill="#28e0ff"/><circle cx="253.0" cy="340.0" r="1" fill="#28e0ff"/><circle cx="253.5" cy="368.0" r="1" fill="#28e0ff"/><circle cx="277.0" cy="370.0" r="1" fill="#28e0ff"/><circle cx="241.0" cy="355.0" r="1" fill="#28e0ff"/><circle cx="503.0" cy="332.0" r="1" fill="#28e0ff"/><circle cx="505.0" cy="366.5" r="1" fill="#28e0ff"/><circle cx="148.0" cy="349.0" r="1" fill="#28e0ff"/><text transform="translate(290.4,452.8) scale(0.74,1)" font-size="9.6" fill="#28e0ff" text-anchor="middle">500 X 180.990</text><path d="M305.2 355.5 V263" stroke="#22b822" stroke-width="1.4" fill="none"/><path d="M305.2 262.5 L307.2 275.5 H303.2 Z" fill="#30f030"/><path d="M305.2 355.5 H388" stroke="#e01030" stroke-width="1.5" fill="none"/><path d="M396 355.5 L385 353.3 V357.7 Z" fill="#ff1838"/><rect x="303.7" y="354" width="3" height="3" fill="#1010ff"/><rect x="304.2" y="268.4" width="2" height="2" fill="#fff"/><rect x="323.2" y="349" width="2" height="2" fill="#fff"/><rect x="355.6" y="354.5" width="2" height="2" fill="#fff"/><rect x="293" y="354.5" width="2" height="2" fill="#fff"/><rect x="86" y="520" width="30" height="29" fill="none" stroke="#9c9cb8" stroke-width="1"/><path d="M86 549 V477" stroke="#22a040" stroke-width="1.2"/><path d="M86.6 476.5 V488.5" stroke="#30f030" stroke-width="2"/><path d="M116 549 H158" stroke="#d01030" stroke-width="1.3"/><path d="M147.5 549.6 H158.5" stroke="#ff2040" stroke-width="2"/><rect x="85.2" y="548.2" width="1.6" height="1.6" fill="#2020ff"/></svg></div><div class="panel" style="left:609px;top:81.5px;width:403px;height:519.5px;"></div><div class="" style="left:609px;top:85.5px;width:403px;height:509.5px;background:#fefefe;border-radius:0 0 6px 6px"></div><div class="btn" style="left:614.5px;top:90px;width:61.3px;height:28.3px;line-height:28.3px;line-height:27px">参数设置</div><div class="inp" style="left:681px;top:92px;width:183px;height:22px;font-size:13.5px;color:#111;line-height:19px;border-right:1px solid #e3e3e3">下模板.dxf</div><div class="btn" style="left:869px;top:90px;width:61.3px;height:28.3px;line-height:28.3px;line-height:27px">导入图纸</div><div class="btn" style="left:934.3px;top:90px;width:31.4px;height:28.3px;line-height:28.3px;line-height:27px">重载</div><div class="btn" style="left:970.2px;top:90px;width:31.5px;height:28.3px;line-height:28.3px;line-height:27px">清空</div><div class="btn" style="left:615.5px;top:130px;width:65px;height:26px;text-align:left;line-height:24px;padding-left:2.5px;font-size:13px">居中<svg style="right:3px;top:8.5px" width="10" height="8" viewBox="0 0 10 8"><path d="M1 1.5 L5 5.5 L9 1.5" fill="none" stroke="#666" stroke-width="1"/></svg></div><div class="btn" style="left:685.5px;top:130px;width:72px;height:26px;text-align:left;line-height:24px;padding-left:1.5px;font-size:13px">铣边模式<svg style="right:3px;top:8.5px" width="10" height="8" viewBox="0 0 10 8"><path d="M1 1.5 L5 5.5 L9 1.5" fill="none" stroke="#666" stroke-width="1"/></svg></div><div class="" style="left:761px;top:129px;width:83px;height:28px;background:#fff;border:1px solid #a8a8a8;font-size:14px;line-height:25px;padding-left:2px;word-spacing:1px;white-space:nowrap">T1 D0<svg style="right:3px;top:10px" width="10" height="8" viewBox="0 0 10 8"><path d="M1 1.5 L5 5.5 L9 1.5" fill="none" stroke="#666" stroke-width="1"/></svg></div><div class="cbx" style="left:852px;top:136px;width:13px;height:13.5px;"><svg style="left:0;top:0" width="13" height="13" viewBox="0 0 13 13"><path d="M3.2 6.6 L5.6 9 L10 4.2" fill="none" stroke="#fff" stroke-width="1.4"/></svg></div><div class="t" style="left:868.5px;top:134px;width:60px;height:18px;line-height:18px;font-size:13px">刀具补偿</div><div class="cbx" style="left:933px;top:136px;width:13px;height:13.5px;"><svg style="left:0;top:0" width="13" height="13" viewBox="0 0 13 13"><path d="M3.2 6.6 L5.6 9 L10 4.2" fill="none" stroke="#fff" stroke-width="1.4"/></svg></div><div class="t" style="left:950px;top:134px;width:60px;height:18px;line-height:18px;font-size:13px">启用开环</div><div class="bb" style="left:615px;top:161.3px;width:72px;height:25.5px;line-height:25.5px;line-height:25.5px">安全高度</div><div class="inp" style="left:698px;top:162.10000000000002px;width:77px;height:23.5px;line-height:23.5px;line-height:24.5px">10.000</div><div class="bb" style="left:814px;top:161.3px;width:72px;height:25.5px;line-height:25.5px;line-height:25.5px">主轴转速</div><div class="inp" style="left:896.5px;top:162.10000000000002px;width:77px;height:23.5px;line-height:23.5px;line-height:24.5px">2000.000</div><div class="bb" style="left:615px;top:192.20000000000002px;width:72px;height:25.5px;line-height:25.5px;line-height:25.5px">铣削深度</div><div class="inp" style="left:698px;top:193.00000000000003px;width:77px;height:23.5px;line-height:23.5px;line-height:24.5px">10.000</div><div class="bb" style="left:814px;top:192.20000000000002px;width:72px;height:25.5px;line-height:25.5px;line-height:25.5px">每层深度</div><div class="inp" style="left:896.5px;top:193.00000000000003px;width:77px;height:23.5px;line-height:23.5px;line-height:24.5px">0.000</div><div class="bb" style="left:615px;top:223.10000000000002px;width:72px;height:25.5px;line-height:25.5px;line-height:25.5px">工件平面</div><div class="inp" style="left:698px;top:223.90000000000003px;width:77px;height:23.5px;line-height:23.5px;line-height:24.5px">0.000</div><div class="bb" style="left:814px;top:223.10000000000002px;width:72px;height:25.5px;line-height:25.5px;line-height:25.5px">R平面</div><div class="inp" style="left:896.5px;top:223.90000000000003px;width:77px;height:23.5px;line-height:23.5px;line-height:24.5px">0.000</div><div class="bb" style="left:615px;top:254.0px;width:72px;height:25.5px;line-height:25.5px;line-height:25.5px">进给速度</div><div class="inp" style="left:698px;top:254.8px;width:77px;height:23.5px;line-height:23.5px;line-height:24.5px">1000.000</div><div class="bb" style="left:814px;top:254.0px;width:72px;height:25.5px;line-height:25.5px;line-height:25.5px">循环次数</div><div class="inp" style="left:896.5px;top:254.8px;width:77px;height:23.5px;line-height:23.5px;line-height:24.5px">0.000</div><div class="cb" style="left:627px;top:312.5px;width:12.5px;height:12.5px;"></div><div class="t" style="left:644px;top:309px;width:40px;height:20px;line-height:20px;font-size:13px">分组</div><div class="btn" style="left:710.2px;top:298.5px;width:66.8px;height:30px;line-height:30px;line-height:28px">全/不选</div><div class="btn" style="left:785.6px;top:298.5px;width:66.8px;height:30px;line-height:30px;line-height:28px">排序切换</div><div class="btn" style="left:861.0px;top:298.5px;width:66.8px;height:30px;line-height:30px;line-height:28px">设为基准</div><div class="btn" style="left:936.4000000000001px;top:298.5px;width:66.8px;height:30px;line-height:30px;line-height:28px">添加工序</div><div style="left:608.8px;top:335px;width:358.2px;height:103.5px;background:#fff;border:1px solid #7f8389;overflow:hidden"><div style="left:75.5px;top:0px;width:1px;height:102px;background:#f1f1f1"></div><div style="left:140.80000000000007px;top:0px;width:1px;height:102px;background:#f1f1f1"></div><div style="left:180.5px;top:0px;width:1px;height:102px;background:#f1f1f1"></div><div style="left:255.70000000000005px;top:0px;width:1px;height:102px;background:#f1f1f1"></div><div style="left:329.9000000000001px;top:0px;width:1px;height:102px;background:#f1f1f1"></div><div style="left:0.7000000000000455px;top:47.30000000000001px;width:338px;height:1px;background:#f3f3f3"></div><div style="left:0.7000000000000455px;top:70.30000000000001px;width:338px;height:1px;background:#f3f3f3"></div><div style="left:0.7000000000000455px;top:93.30000000000001px;width:338px;height:1px;background:#f3f3f3"></div><div style="left:339.70000000000005px;top:0px;width:17px;height:102px;background:#f0f0f0"></div><div style="left:346.80000000000007px;top:17.5px;width:2px;height:17px;background:#555"></div><div class="th" style="left:7.2000000000000455px;top:3px;width:40px;height:20px;line-height:20px;text-align:left;font-size:13px">序号</div><div class="th" style="left:80.20000000000005px;top:3px;width:55.5px;height:20px;line-height:20px;text-align:right;font-size:13px">D直径</div><div class="th" style="left:142.20000000000005px;top:3px;width:33.5px;height:20px;line-height:20px;text-align:right;font-size:13px">孔数</div><div class="th" style="left:185.20000000000005px;top:3px;width:64px;height:20px;line-height:20px;text-align:right;font-size:13px">X坐标</div><div class="th" style="left:260.20000000000005px;top:3px;width:64.5px;height:20px;line-height:20px;text-align:right;font-size:13px">Y坐标</div><div class="cb" style="left:5.2000000000000455px;top:30.600000000000023px;width:12px;height:12px"></div><div class="th" style="left:23.200000000000045px;top:26.100000000000023px;width:40px;height:20px;line-height:20px;text-align:left;font-size:13px">工步1</div><div class="th" style="left:80.20000000000005px;top:26.100000000000023px;width:54.5px;height:20px;line-height:20px;text-align:right;font-size:13.3px">1</div><div class="th" style="left:142.20000000000005px;top:26.100000000000023px;width:32.5px;height:20px;line-height:20px;text-align:right;font-size:13.3px">1</div><div class="th" style="left:185.20000000000005px;top:26.100000000000023px;width:64px;height:20px;line-height:20px;text-align:right;font-size:13.3px">19.422</div><div class="th" style="left:260.20000000000005px;top:26.100000000000023px;width:64.5px;height:20px;line-height:20px;text-align:right;font-size:13.3px">1.498</div><div class="cb" style="left:5.2000000000000455px;top:53.60000000000002px;width:12px;height:12px"></div><div class="th" style="left:23.200000000000045px;top:49.10000000000002px;width:40px;height:20px;line-height:20px;text-align:left;font-size:13px">工步2</div><div class="th" style="left:80.20000000000005px;top:49.10000000000002px;width:54.5px;height:20px;line-height:20px;text-align:right;font-size:13.3px">1</div><div class="th" style="left:142.20000000000005px;top:49.10000000000002px;width:32.5px;height:20px;line-height:20px;text-align:right;font-size:13.3px">1</div><div class="th" style="left:185.20000000000005px;top:49.10000000000002px;width:64px;height:20px;line-height:20px;text-align:right;font-size:13.3px">-33.878</div><div class="th" style="left:260.20000000000005px;top:49.10000000000002px;width:64.5px;height:20px;line-height:20px;text-align:right;font-size:13.3px">19.318</div><div class="cb" style="left:5.2000000000000455px;top:76.60000000000002px;width:12px;height:12px"></div><div class="th" style="left:23.200000000000045px;top:72.10000000000002px;width:40px;height:20px;line-height:20px;text-align:left;font-size:13px">工步3</div><div class="th" style="left:80.20000000000005px;top:72.10000000000002px;width:54.5px;height:20px;line-height:20px;text-align:right;font-size:13.3px">1</div><div class="th" style="left:142.20000000000005px;top:72.10000000000002px;width:32.5px;height:20px;line-height:20px;text-align:right;font-size:13.3px">1</div><div class="th" style="left:185.20000000000005px;top:72.10000000000002px;width:64px;height:20px;line-height:20px;text-align:right;font-size:13.3px">-36.034</div><div class="th" style="left:260.20000000000005px;top:72.10000000000002px;width:64.5px;height:20px;line-height:20px;text-align:right;font-size:13.3px">10.012</div><div class="cb" style="left:5.2000000000000455px;top:99.60000000000002px;width:12px;height:12px"></div><div class="th" style="left:23.200000000000045px;top:95.10000000000002px;width:40px;height:20px;line-height:20px;text-align:left;font-size:13px">工步4</div><div class="th" style="left:80.20000000000005px;top:95.10000000000002px;width:54.5px;height:20px;line-height:20px;text-align:right;font-size:13.3px">1</div><div class="th" style="left:142.20000000000005px;top:95.10000000000002px;width:32.5px;height:20px;line-height:20px;text-align:right;font-size:13.3px">1</div><div class="th" style="left:185.20000000000005px;top:95.10000000000002px;width:64px;height:20px;line-height:20px;text-align:right;font-size:13.3px">-45.052</div><div class="th" style="left:260.20000000000005px;top:95.10000000000002px;width:64.5px;height:20px;line-height:20px;text-align:right;font-size:13.3px">7.460</div></div><div class="btn" style="left:979px;top:336px;width:26.5px;height:47px;line-height:47px;line-height:19px;padding-top:4px">删<br>除</div><div class="btn" style="left:979px;top:390.5px;width:26.5px;height:47.5px;line-height:47.5px;line-height:19px;padding-top:4px">反<br>向</div><div class="btn" style="left:710.2px;top:443px;width:66.8px;height:30px;line-height:30px;line-height:28px">全选/不选</div><div class="btn" style="left:785.6px;top:443px;width:66.8px;height:30px;line-height:30px;line-height:28px">删除</div><div class="btn" style="left:861.0px;top:443px;width:66.8px;height:30px;line-height:30px;line-height:28px">清空</div><div class="btn" style="left:936.4000000000001px;top:443px;width:66.8px;height:30px;line-height:30px;line-height:28px">生成程序</div><div style="left:608.8px;top:475.4px;width:358.7px;height:115px;background:#fff;border:1px solid #7f8389;overflow:hidden"><div style="left:70.90000000000009px;top:0.6000000000000227px;width:1px;height:113px;background:#f1f1f1"></div><div style="left:115.40000000000009px;top:0.6000000000000227px;width:1px;height:113px;background:#f1f1f1"></div><div style="left:175.0px;top:0.6000000000000227px;width:1px;height:113px;background:#f1f1f1"></div><div style="left:220.20000000000005px;top:0.6000000000000227px;width:1px;height:113px;background:#f1f1f1"></div><div style="left:290.20000000000005px;top:0.6000000000000227px;width:1px;height:113px;background:#f1f1f1"></div><div style="left:334.20000000000005px;top:0.6000000000000227px;width:1px;height:113px;background:#f1f1f1"></div><div style="left:0.7000000000000455px;top:46.60000000000002px;width:356px;height:1px;background:#f3f3f3"></div><div style="left:0.7000000000000455px;top:69.60000000000002px;width:356px;height:1px;background:#f3f3f3"></div><div style="left:0.7000000000000455px;top:92.60000000000002px;width:356px;height:1px;background:#f3f3f3"></div><div class="th" style="left:7.2000000000000455px;top:2.6000000000000227px;width:40px;height:20px;line-height:20px;text-align:left;font-size:13px">序号</div><div class="th" style="left:76.70000000000005px;top:2.6000000000000227px;width:40px;height:20px;line-height:20px;text-align:left;font-size:13px">类型</div><div class="th" style="left:120.20000000000005px;top:2.6000000000000227px;width:49.5px;height:20px;line-height:20px;text-align:right;font-size:13px">深度</div><div class="th" style="left:179.20000000000005px;top:2.6000000000000227px;width:35px;height:20px;line-height:20px;text-align:right;font-size:13px">刀具</div><div class="th" style="left:225.20000000000005px;top:2.6000000000000227px;width:59px;height:20px;line-height:20px;text-align:right;font-size:13px">刀具直径</div><div class="th" style="left:295.20000000000005px;top:2.6000000000000227px;width:34px;height:20px;line-height:20px;text-align:right;font-size:13px">孔数</div><div class="th" style="left:347.20000000000005px;top:2.6000000000000227px;width:30px;height:20px;line-height:20px;text-align:left;font-size:13px">行号</div></div><div class="btn" style="left:976.5px;top:483.5px;width:27px;height:46.5px;line-height:46.5px;line-height:19px;padding-top:4px">上<br>移</div><div class="btn" style="left:976.5px;top:540px;width:27px;height:47px;line-height:47px;line-height:19px;padding-top:4px">下<br>移</div><div class="panel" style="left:11px;top:609px;width:590px;height:118px;"></div><div class="lab" style="left:41px;top:620px;width:22px;height:20px;line-height:20px;padding-left:1px">X</div><div class="val" style="left:69px;top:617px;width:78px;height:26px;line-height:26px;">-559.194</div><div class="lab" style="left:150.5px;top:620px;width:28px;height:20px;line-height:20px;padding-left:1px">WX</div><div class="val" style="left:179px;top:617px;width:77px;height:26px;line-height:26px;">-2.500</div><div class="lab" style="left:41px;top:658px;width:22px;height:20px;line-height:20px;padding-left:1px">Y</div><div class="val" style="left:69px;top:655px;width:78px;height:26px;line-height:26px;">-0.865</div><div class="lab" style="left:150.5px;top:658px;width:28px;height:20px;line-height:20px;padding-left:1px">WY</div><div class="val" style="left:179px;top:655px;width:77px;height:26px;line-height:26px;">-2.500</div><div class="lab" style="left:41px;top:696px;width:22px;height:20px;line-height:20px;padding-left:1px">Z</div><div class="val" style="left:69px;top:693px;width:78px;height:26px;line-height:26px;">-10.000</div><div class="lab" style="left:150.5px;top:696px;width:28px;height:20px;line-height:20px;padding-left:1px">WZ</div><div class="val" style="left:179px;top:693px;width:77px;height:26px;line-height:26px;">-10.000</div><div class="lab" style="left:287.5px;top:622px;width:21px;height:19px;line-height:19px;padding-left:1px">S</div><div class="val" style="left:315px;top:618px;width:76px;height:25.5px;line-height:25.5px;">0.000</div><div class="lab" style="left:287.5px;top:656px;width:21px;height:19px;line-height:19px;padding-left:1px">C</div><div class="val" style="left:315px;top:652px;width:76px;height:25.5px;line-height:25.5px;">0.000</div><div class="lab" style="left:287.5px;top:694px;width:21px;height:19px;line-height:19px;padding-left:1px">6</div><div class="val" style="left:315px;top:690px;width:76px;height:25.5px;line-height:25.5px;">0.000</div><div class="lab" style="left:416px;top:617px;width:20px;height:19px;line-height:19px;padding-left:1px">7</div><div class="val" style="left:438px;top:614.5px;width:77px;height:25.5px;line-height:25.5px;">0.000</div><div class="lab" style="left:416px;top:650px;width:20px;height:19px;line-height:19px;padding-left:1px">8</div><div class="val" style="left:438px;top:647.5px;width:77px;height:25.5px;line-height:25.5px;">0.000</div><div class="lab c" style="left:536px;top:615px;width:57px;height:16px;line-height:16px;font-size:13px;font-weight:500;background:#f8f8ff">当前产量</div><div class="val" style="left:533.5px;top:636.5px;width:61px;height:29.5px;line-height:29.5px;font-size:24px;color:#a033c4;line-height:32.5px">0</div><div class="" style="left:412.5px;top:678.5px;width:171px;height:42px;background:#fbfbff"></div><div class="t" id="lcd" style="left:417.9px;top:678.9px;width:260px;height:44px;line-height:44px;font-family:'DejaVu Sans',sans-serif;font-weight:bold;font-size:46px;color:#6a5acd;-webkit-text-stroke:1.2px #fbfbff;transform-origin:0 50%;transform:scaleX(0.709);letter-spacing:1.55px">00<span class="co">:</span>00<span class="co">:</span>00</div><div class="panel" style="left:609px;top:609px;width:402px;height:119.5px;"></div><div style="left:624px;top:619.5px;width:287px;height:93px;background:#fff;border-top:2px solid #6e6e6e;border-left:2px solid #6e6e6e;border-bottom:1px solid #e0e0e0;border-right:1px solid #e0e0e0"></div><div class="t" style="left:626.5px;top:622px;width:200px;height:22px;line-height:22px;font-size:17.5px;letter-spacing:0.18px;color:#151515">[2024-06-15 17:51:17]</div><div class="t" style="left:625.5px;top:646px;width:200px;height:22px;line-height:22px;font-size:17px;color:#151515">打开DXF文件成功!</div><div class="bb" style="left:923.5px;top:614.6px;width:72.5px;height:25.2px;line-height:25.2px;line-height:24.5px">快速换刀</div><div class="bb" style="left:923.5px;top:643.25px;width:72.5px;height:25.2px;line-height:25.2px;line-height:24.5px">MDI指令</div><div class="bb" style="left:923.5px;top:671.9px;width:72.5px;height:25.2px;line-height:25.2px;line-height:24.5px">自动对刀</div><div class="bb" style="left:923.5px;top:700.55px;width:72.5px;height:25.2px;line-height:25.2px;line-height:24.5px">至安全位</div><div class="" style="left:2px;top:738px;width:1015px;height:27px;background:#f5f5f7"></div><div class="" style="left:2px;top:762.2px;width:1015px;height:1.2px;background:#e2e2e4"></div><div class="" style="left:1016px;top:738px;width:1px;height:25px;background:#dedee2"></div><div class="" style="left:2.2px;top:740px;width:114.6px;height:21.8px;background:#c1c1c1"></div><div class="" style="left:120px;top:740px;width:332.5px;height:22px;background:#fff"></div><div class="" style="left:454px;top:740px;width:116px;height:22px;background:#fff"></div><div class="" style="left:572px;top:740px;width:314px;height:22px;background:#fff"></div><div class="" style="left:888px;top:740px;width:129px;height:22px;background:#fff"></div><div class="t c" style="left:2px;top:741.3px;width:115px;height:22px;line-height:22px;font-size:18px">NCS:待机</div><div class="t c" style="left:120px;top:741.3px;width:332px;height:22px;line-height:22px;font-size:18px">线段.nc</div><div class="t c" style="left:454px;top:741.3px;width:118px;height:22px;line-height:22px;font-size:18px">F0</div><div class="t c" style="left:888px;top:741.3px;width:130px;height:22px;line-height:22px;font-size:18px">0.00%</div></div></body></html>
